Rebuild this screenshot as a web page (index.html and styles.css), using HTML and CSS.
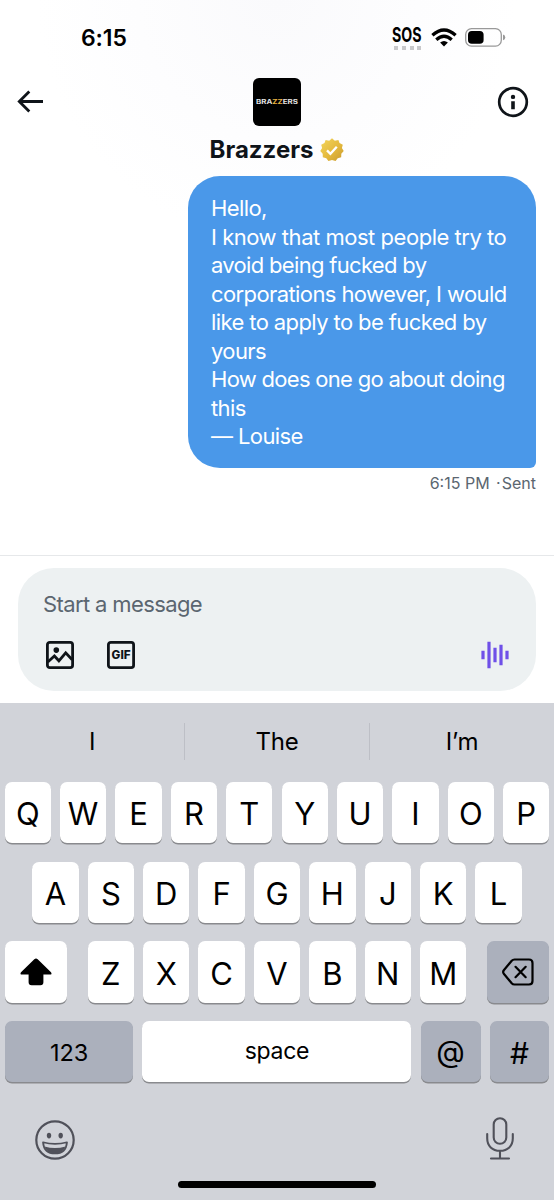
FILE: index.html
```html
<!DOCTYPE html>
<html lang="en">
<head>
<meta charset="utf-8">
<title>Messages</title>
<link rel="stylesheet" href="styles.css">
</head>
<body>
<div class="phone">
  <div class="status">
    <span class="time">6:15</span>
    <div class="indicators">
      <div class="sos"><span class="sos-text">SOS</span><div class="dots"><i></i><i></i><i></i><i></i></div></div>
      <svg class="wifi" width="26" height="19" viewBox="0 0 26 19" fill="none" stroke="#000" stroke-width="3.3"><path d="M1.4 7.3Q13-3.3 24.6 7.3"/><path d="M5.3 11.8Q13 4.8 20.7 11.8"/><path d="M13 18.4 9.1 14.5Q13 11.4 16.9 14.5Z" fill="#000" stroke="none"/></svg>
      <svg class="battery" width="41" height="19" viewBox="0 0 41 19"><rect x=".7" y=".7" width="35.6" height="17.4" rx="5.8" fill="none" stroke="#999" stroke-width="1.3"/><rect x="3" y="3" width="15.6" height="12.8" rx="3.8"/><path d="M38 6.5q2.3.8 2.3 2.9t-2.3 2.9z" fill="#999"/></svg>
    </div>
  </div>
  <header class="header">
    <svg class="back" width="27" height="23" viewBox="0 0 27 23" fill="none" stroke="#0f1419" stroke-width="2.8"><path d="M12.3 1.5 2.3 11.5l10 10M2.5 11.5H26"/></svg>
    <div class="profile">
      <div class="avatar"><svg width="48" height="48" viewBox="0 0 48 48"><text class="logo" x="3" y="26" textLength="42" lengthAdjust="spacingAndGlyphs">BRA<tspan class="gold">ZZ</tspan>ERS</text></svg></div>
      <div class="name"><span>Brazzers</span>
        <svg width="24" height="24" viewBox="0 0 24 24"><defs><linearGradient id="g" x1="0" y1="0" x2="1" y2="1"><stop offset="0" stop-color="#f3d65c"/><stop offset=".55" stop-color="#e4b93d"/><stop offset="1" stop-color="#c99a2e"/></linearGradient></defs><path fill="url(#g)" d="M12 .3 14.8 2.7 18.4 1.9 19.5 5.1 22.8 6.7 21.9 10 23.7 13.1 21.3 15.7 21.2 19.3 17.7 20.2 15.6 23.1 12 22 8.4 23.1 6.3 20.2 2.8 19.3 2.7 15.7.3 13.1 2.1 10 1.2 6.7 4.5 5.1 5.6 1.9 9.2 2.7Z"/><path d="m7 12.4 3.4 3.4 6.4-7" fill="none" stroke="#fff" stroke-width="2.3"/></svg>
      </div>
    </div>
    <svg class="info" width="32" height="32" viewBox="0 0 32 32"><circle cx="16" cy="16" r="13.8" fill="none" stroke="#0f1419" stroke-width="2.7"/><circle cx="16" cy="10.9" r="2.2" fill="#0f1419"/><path d="M14.2 15.2h3.6v8h-3.6z" fill="#0f1419"/></svg>
  </header>
  <main class="thread">
    <div class="bubble">
      <div class="l1">Hello,</div>
      <div class="l2">I know that most people try to</div>
      <div class="l3">avoid being fucked by</div>
      <div class="l4">corporations however, I would</div>
      <div class="l5">like to apply to be fucked by</div>
      <div class="l6">yours</div>
      <div class="l7">How does one go about doing</div>
      <div class="l8">this</div>
      <div class="l9">— Louise</div>
    </div>
    <div class="receipt">6:15 PM <span>·</span>Sent</div>
  </main>
  <section class="composer">
    <div class="box">
      <div class="placeholder">Start a message</div>
      <div class="tools">
        <svg width="28" height="28" viewBox="0 0 28 28" fill="none" stroke="#0f1419" stroke-width="2.8"><rect x="1.4" y="1.4" width="25.2" height="25.2" rx="2.4"/><path d="m1.8 21 6.6-6 4.5 4.8 6.8-8 6.5 7"/><circle cx="10.3" cy="9.1" r="2.8" fill="#0f1419" stroke="none"/></svg>
        <svg class="gif" width="28" height="28" viewBox="0 0 28 28"><rect x="1.4" y="1.4" width="25.2" height="25.2" rx="2.4" fill="none" stroke="#0f1419" stroke-width="2.8"/><text class="gif-text" x="4.6" y="18.2" textLength="19" lengthAdjust="spacingAndGlyphs">GIF</text></svg>
        <svg class="voice" width="28" height="28" viewBox="0 0 28 28" stroke="#6f50e8" stroke-width="3.2"><path d="M2 9.7v8.6M8 .7v26.6M14 6.7v14.6M20 3.7v20.6M26 9.7v8.6"/></svg>
      </div>
    </div>
  </section>
  <section class="keyboard">
    <div class="suggestions"><span>I</span><span>The</span><span>I’m</span></div>
    <div class="row"><b>Q</b><b>W</b><b>E</b><b>R</b><b>T</b><b>Y</b><b>U</b><b>I</b><b>O</b><b>P</b></div>
    <div class="row"><b>A</b><b>S</b><b>D</b><b>F</b><b>G</b><b>H</b><b>J</b><b>K</b><b>L</b></div>
    <div class="row">
      <b class="shift"><svg width="32" height="28" viewBox="0 0 32 28"><path d="M14.3 1.3q1.7-1.6 3.4 0L31 14.2q1.4 2.4-1 2.4h-6.6v7.7q0 3-3 3h-8.8q-3 0-3-3v-7.7H2q-2.4 0-1-2.4Z"/></svg></b>
      <b>Z</b><b>X</b><b>C</b><b>V</b><b>B</b><b>N</b><b>M</b>
      <b class="dark delete"><svg width="32" height="28" viewBox="0 0 32 28" fill="none" stroke="#000" stroke-width="2.2" stroke-linecap="round" stroke-linejoin="round"><path d="M12.5 1.5H27q3.5 0 3.5 3.5v18q0 3.5-3.5 3.5H12.5q-1.7 0-2.8-1.2L2 16q-1.7-2 0-4l7.7-9.3q1.1-1.2 2.8-1.2Z"/><path d="m13.5 8.8 10.2 10.4m0-10.4L13.5 19.2"/></svg></b>
    </div>
    <div class="row">
      <b class="dark num">123</b><b class="space">space</b><b class="dark at">@</b><b class="dark hash">#</b>
    </div>
    <div class="dock">
      <svg class="emoji" width="40" height="40" viewBox="0 0 40 40" fill="none" stroke="#50515a" stroke-width="2.2"><circle cx="20" cy="20" r="18.7"/><g fill="#50515a" stroke="none"><ellipse cx="14" cy="15.6" rx="2.2" ry="2.8"/><ellipse cx="25.7" cy="15.6" rx="2.2" ry="2.8"/><path d="M9.5 26.5q10.5 3 21 0-3 7-10.5 7t-10.5-7Z"/></g><path d="M8 22.3q12 3.2 24 0-1 11.2-12 11.2T8 22.3Z" stroke-width="1.7" stroke-linejoin="round"/></svg>
      <svg class="mic" width="28" height="43" viewBox="0 0 28 43" fill="none" stroke="#50515a" stroke-width="2.1" stroke-linecap="round"><rect x="7.7" y="1.2" width="12.6" height="25.6" rx="6.3"/><path d="M1.2 17v4.3C1.2 29 6.3 33.8 14 33.8S26.8 29 26.8 21.3V17M14 34v7.5M5 41.5h18"/></svg>
    </div>
    <div class="home"></div>
  </section>
</div>
</body>
</html>
```
FILE: styles.css
```css
* { box-sizing: border-box; }
body { margin: 0; font-family: Inter, "Liberation Sans", sans-serif; color: #0f1419; }
svg { display: block; flex: none; }
.phone { width: 554px; height: 1200px; overflow: hidden; display: flex; flex-direction: column; background: #fff radial-gradient(circle at 277px 0, #fafafc 0, #fdfdfe 140px, #fff 240px) no-repeat; }

.status { height: 76px; padding: 24px 48px 0 81px; display: flex; justify-content: space-between; align-items: flex-start; color: #000; }
.time { font-size: 23px; line-height: 28px; font-weight: 600; letter-spacing: -.1px; }
.indicators { display: flex; padding-top: 2px; }
.sos { width: 32px; }
.sos-text { display: block; width: 44px; height: 19px; font-size: 20px; line-height: 19px; font-weight: 700; transform: scaleX(.71); transform-origin: 0 0; }
.dots { display: flex; gap: 3.8px; padding: 0 0 0 2px; margin-top: .5px; }
.dots i { width: 4px; height: 4px; background: #c8c8ca; }
.wifi { margin: 2px 0 0 7px; }
.battery { margin: 2px 0 0 8px; }

.header { height: 100px; display: grid; grid-template-columns: 1fr auto 1fr; align-items: start; padding: 2px 25px 0 17px; }
.back { margin-top: 12px; }
.profile { display: flex; flex-direction: column; align-items: center; margin-left: 8px; }
.header .info { margin-top: 8px; justify-self: end; }
.avatar { width: 48px; height: 48px; border-radius: 6px; background: #000; overflow: hidden; }
.logo { font-size: 5.6px; font-weight: 700; fill: #e2e2e2; }
.gold { fill: #eab541; }
.name { display: flex; align-items: center; gap: 7px; margin-top: 9px; font-size: 24px; line-height: 30px; font-weight: 750; }

.thread { height: 379px; padding: 0 18px; display: flex; flex-direction: column; align-items: flex-end; }
.bubble { width: 348.5px; height: 292px; padding: 18.2px 24px 0 23.5px; border-radius: 32px 32px 6px 32px; background: #4a98e9; color: #fff; font-size: 22px; line-height: 28.5px; font-weight: 380; letter-spacing: -.6px; white-space: nowrap; }
.bubble .l2 { letter-spacing: -.47px; }
.bubble .l3 { letter-spacing: -.68px; }
.bubble .l5 { letter-spacing: -.6px; }
.bubble .l7 { letter-spacing: -.7px; }
.bubble .l9 { letter-spacing: -.6px; }
.receipt { margin-top: 5px; font-size: 16px; line-height: 20px; color: #5b6670; }
.receipt span { margin: 0 1px 0 2px; }

.composer { height: 148px; border-top: 1.5px solid #e6e8ea; padding: 11.5px 18px 0; }
.box { height: 123px; border-radius: 36px; background: #edf1f2; padding: 21px 27px 0 25px; }
.placeholder { font-size: 22px; line-height: 30px; color: #5b6670; letter-spacing: -.62px; }
.tools { display: flex; padding: 22px 0 0 3px; }
.gif { margin-left: 33px; }
.gif-text { font-size: 11.5px; font-weight: 800; fill: #0f1419; }
.voice { margin-left: auto; }

.keyboard { height: 497px; background: #d1d3d9; color: #000; }
.suggestions { height: 79px; padding-top: 20px; display: flex; }
.suggestions span { flex: 1; height: 37px; line-height: 37px; text-align: center; font-size: 24px; letter-spacing: -.3px; border-left: 1.5px solid #bdbfc6; }
.suggestions span:first-child { border-left: 0; }
.row { display: flex; justify-content: center; gap: 9.1px; height: 61.4px; margin-bottom: 18.3px; padding: 0 4.5px; }
.row b { width: 46.3px; flex: none; display: flex; align-items: center; justify-content: center; padding-top: 2px; border-radius: 7px; background: #fff; box-shadow: 0 1.5px 0 #898a8e; font-size: 31px; font-weight: 370; }
.row .dark { background: #abb0bc; }
.row .shift { width: 62px; margin-right: 11.7px; padding: 0; }
.row .delete { width: 62px; margin-left: 11.7px; padding: 0; }
.row .num { width: 128.5px; font-size: 23.5px; }
.row .space { width: 269px; font-size: 23px; letter-spacing: -.3px; padding-bottom: 3px; font-weight: 400; }
.row .at { width: 60px; font-size: 29.5px; padding: 0 0 2px; font-weight: 400; }
.row .hash { width: 59.5px; font-size: 30px; }
.dock { display: flex; justify-content: space-between; padding: 16px 40px 0 35px; height: 80px; }
.emoji { margin-top: 3px; }
.home { width: 198px; height: 7.5px; border-radius: 4px; background: #000; margin: 0 auto; }
```
